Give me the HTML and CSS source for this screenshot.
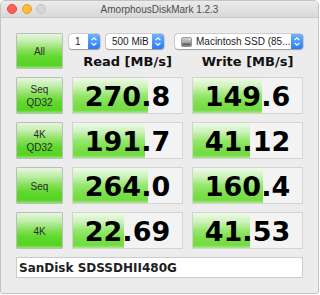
FILE: index.html
```html
<!DOCTYPE html>
<html>
<head>
<meta charset="utf-8">
<title>AmorphousDiskMark 1.2.3</title>
<link rel="stylesheet" href="styles.css">
</head>
<body>
<div class="window">
  <div class="titlebar">
    <div class="lights">
      <span class="light close"></span>
      <span class="light minimize"></span>
      <span class="light zoom"></span>
    </div>
    <div class="title">AmorphousDiskMark 1.2.3</div>
    <div></div>
  </div>

  <div class="content">
    <div class="test-btn">All</div>
    <div class="top">
      <div class="popups">
        <div class="popup count">
          <span class="popup-label">1</span>
          <span class="stepper"><svg width="12" height="15" viewBox="0 0 12 15"><path d="M3.6 6.2 L6 3.8 L8.4 6.2 M3.6 8.8 L6 11.2 L8.4 8.8" fill="none" stroke="#fff" stroke-width="1.2"/></svg></span>
        </div>
        <div class="popup size">
          <span class="popup-label">500 MiB</span>
          <span class="stepper"><svg width="12" height="15" viewBox="0 0 12 15"><path d="M3.6 6.2 L6 3.8 L8.4 6.2 M3.6 8.8 L6 11.2 L8.4 8.8" fill="none" stroke="#fff" stroke-width="1.2"/></svg></span>
        </div>
        <div class="popup drive">
          <span class="popup-label">
            <svg class="disk-icon" width="11" height="10" viewBox="0 0 11 10">
              <defs>
                <linearGradient id="disk" x1="0" y1="0" x2="0" y2="1">
                  <stop offset="0" stop-color="#d8d8d8"/>
                  <stop offset="0.5" stop-color="#a9a9a9"/>
                  <stop offset="1" stop-color="#7c7c7c"/>
                </linearGradient>
              </defs>
              <rect x="0.5" y="0.5" width="10" height="9" rx="1.2" fill="url(#disk)" stroke="#6d6d6d" stroke-width="0.6"/>
              <rect x="1.8" y="6.4" width="7.4" height="1.6" fill="#5a5a5a"/>
              <circle cx="8.4" cy="2.4" r="0.7" fill="#eee"/>
            </svg>
            Macintosh SSD (85...
          </span>
          <span class="stepper"><svg width="12" height="15" viewBox="0 0 12 15"><path d="M3.6 6.2 L6 3.8 L8.4 6.2 M3.6 8.8 L6 11.2 L8.4 8.8" fill="none" stroke="#fff" stroke-width="1.2"/></svg></span>
        </div>
      </div>
      <div class="col-head">Read [MB/s]</div>
      <div class="col-head">Write [MB/s]</div>
    </div>

    <div class="test-btn">Seq<br>QD32</div>
    <div class="result"><div class="bar" style="width: 68.65%"></div><span class="value">270.8</span></div>
    <div class="result"><div class="bar" style="width: 63.50%"></div><span class="value">149.6</span></div>

    <div class="test-btn">4K<br>QD32</div>
    <div class="result"><div class="bar" style="width: 65.65%"></div><span class="value">191.7</span></div>
    <div class="result"><div class="bar" style="width: 52.28%"></div><span class="value">41.12</span></div>

    <div class="test-btn">Seq</div>
    <div class="result"><div class="bar" style="width: 68.43%"></div><span class="value">264.0</span></div>
    <div class="result"><div class="bar" style="width: 64.10%"></div><span class="value">160.4</span></div>

    <div class="test-btn">4K</div>
    <div class="result"><div class="bar" style="width: 47.12%"></div><span class="value">22.69</span></div>
    <div class="result"><div class="bar" style="width: 52.37%"></div><span class="value">41.53</span></div>

    <div class="drive-name">SanDisk SDSSDHII480G</div>
  </div>
</div>
</body>
</html>
```

FILE: styles.css
```css
* {
   box-sizing: border-box;
}

body {
   margin: 0;
   background-color: #ffffff;
   font-family: "Liberation Sans", Arial, sans-serif;
}

.window {
   width: 319px;
   height: 294px;
   border: 1px solid #c4c4c4;
   border-radius: 5px 5px 3px 3px;
   background-color: #ececec;
   overflow: hidden;
}

/* title bar */

.titlebar {
   height: 17px;
   display: grid;
   grid-template-columns: 1fr auto 1fr;
   align-items: center;
   background: linear-gradient(#ebebeb, #d9d9d9);
   border-bottom: 1px solid #c9c9c9;
}

.lights {
   display: flex;
   gap: 4.5px;
   padding-left: 6px;
}

.light {
   width: 10px;
   height: 10px;
   border-radius: 50%;
}

.light.close {
   background-color: #fc605c;
   border: 0.5px solid #e0443e;
}

.light.minimize {
   background-color: #fdbc40;
   border: 0.5px solid #dea123;
}

.light.zoom {
   background-color: #d6d6d6;
   border: 0.5px solid #c2c2c2;
}

.title {
   font-size: 10px;
   color: #4d4d4d;
}

/* main grid */

.content {
   display: grid;
   grid-template-columns: 47px 111px 111px;
   grid-template-rows: 36px repeat(4, 37px) 21px;
   column-gap: 9px;
   row-gap: 8px;
   padding: 15px 15px 0 15px;
}

.test-btn {
   display: flex;
   align-items: center;
   justify-content: center;
   text-align: center;
   font-size: 10px;
   line-height: 13px;
   color: #2b2b2b;
   border: 1px solid #bdbdbd;
   border-radius: 1px;
   padding-top: 1px;
   background: linear-gradient(#e6f7de 0%, #c2eead 22%, #86e05a 48%, #5fd72c 70%, #56d322 92%, #93e572 100%);
}

.top {
   grid-column: 2 / 4;
   display: grid;
   grid-template-columns: 111px 111px;
   grid-template-rows: 15px 1fr;
   column-gap: 9px;
   padding-top: 1px;
}

.popups {
   grid-column: 1 / 3;
   display: flex;
   margin-left: -3px;
}

.popup {
   display: flex;
   height: 15px;
   background-color: #ffffff;
   border-radius: 3px;
   box-shadow: 0 0 0 0.5px rgba(0, 0, 0, 0.22), 0 0.5px 1px rgba(0, 0, 0, 0.25);
   font-size: 10px;
   color: #1d1d1d;
}

.popup.count {
   width: 31px;
}

.popup.size {
   width: 58px;
   margin-left: 6px;
}

.popup.drive {
   width: 128px;
   margin-left: 11px;
}

.popup-label {
   flex: 1;
   display: flex;
   align-items: center;
   gap: 4px;
   padding-left: 6px;
   white-space: nowrap;
   overflow: hidden;
}

.disk-icon {
   flex: none;
}

.stepper {
   width: 12px;
   height: 15px;
   border-radius: 0 3px 3px 0;
   background: linear-gradient(#6db2fb, #2a7cf3);
}

.stepper svg {
   display: block;
}

.col-head {
   align-self: end;
   text-align: center;
   font-family: "DejaVu Sans", Verdana, sans-serif;
   font-weight: bold;
   font-size: 13px;
   line-height: 15px;
   color: #111111;
}

/* result cells */

.result {
   display: grid;
   border: 1px solid #d3d3d3;
   background-color: #f3f3f3;
}

.result > * {
   grid-area: 1 / 1;
}

.bar {
   justify-self: start;
   background: linear-gradient(#eef9e9 0%, #cdf2bb 25%, #96e76d 50%, #7ade4a 75%, #73dc41 92%, #a8eb8b 100%);
}

.value {
   align-self: center;
   justify-self: center;
   padding-top: 3px;
   font-family: "DejaVu Sans", Verdana, sans-serif;
   font-weight: bold;
   font-size: 27px;
   line-height: 30px;
   color: #000000;
}

.drive-name {
   grid-column: 1 / 4;
   display: flex;
   align-items: center;
   padding-left: 2px;
   background-color: #ffffff;
   border: 1px solid #cbcbcb;
   font-family: "DejaVu Sans", Verdana, sans-serif;
   font-weight: bold;
   font-size: 12px;
   color: #1e1e1e;
}
```
